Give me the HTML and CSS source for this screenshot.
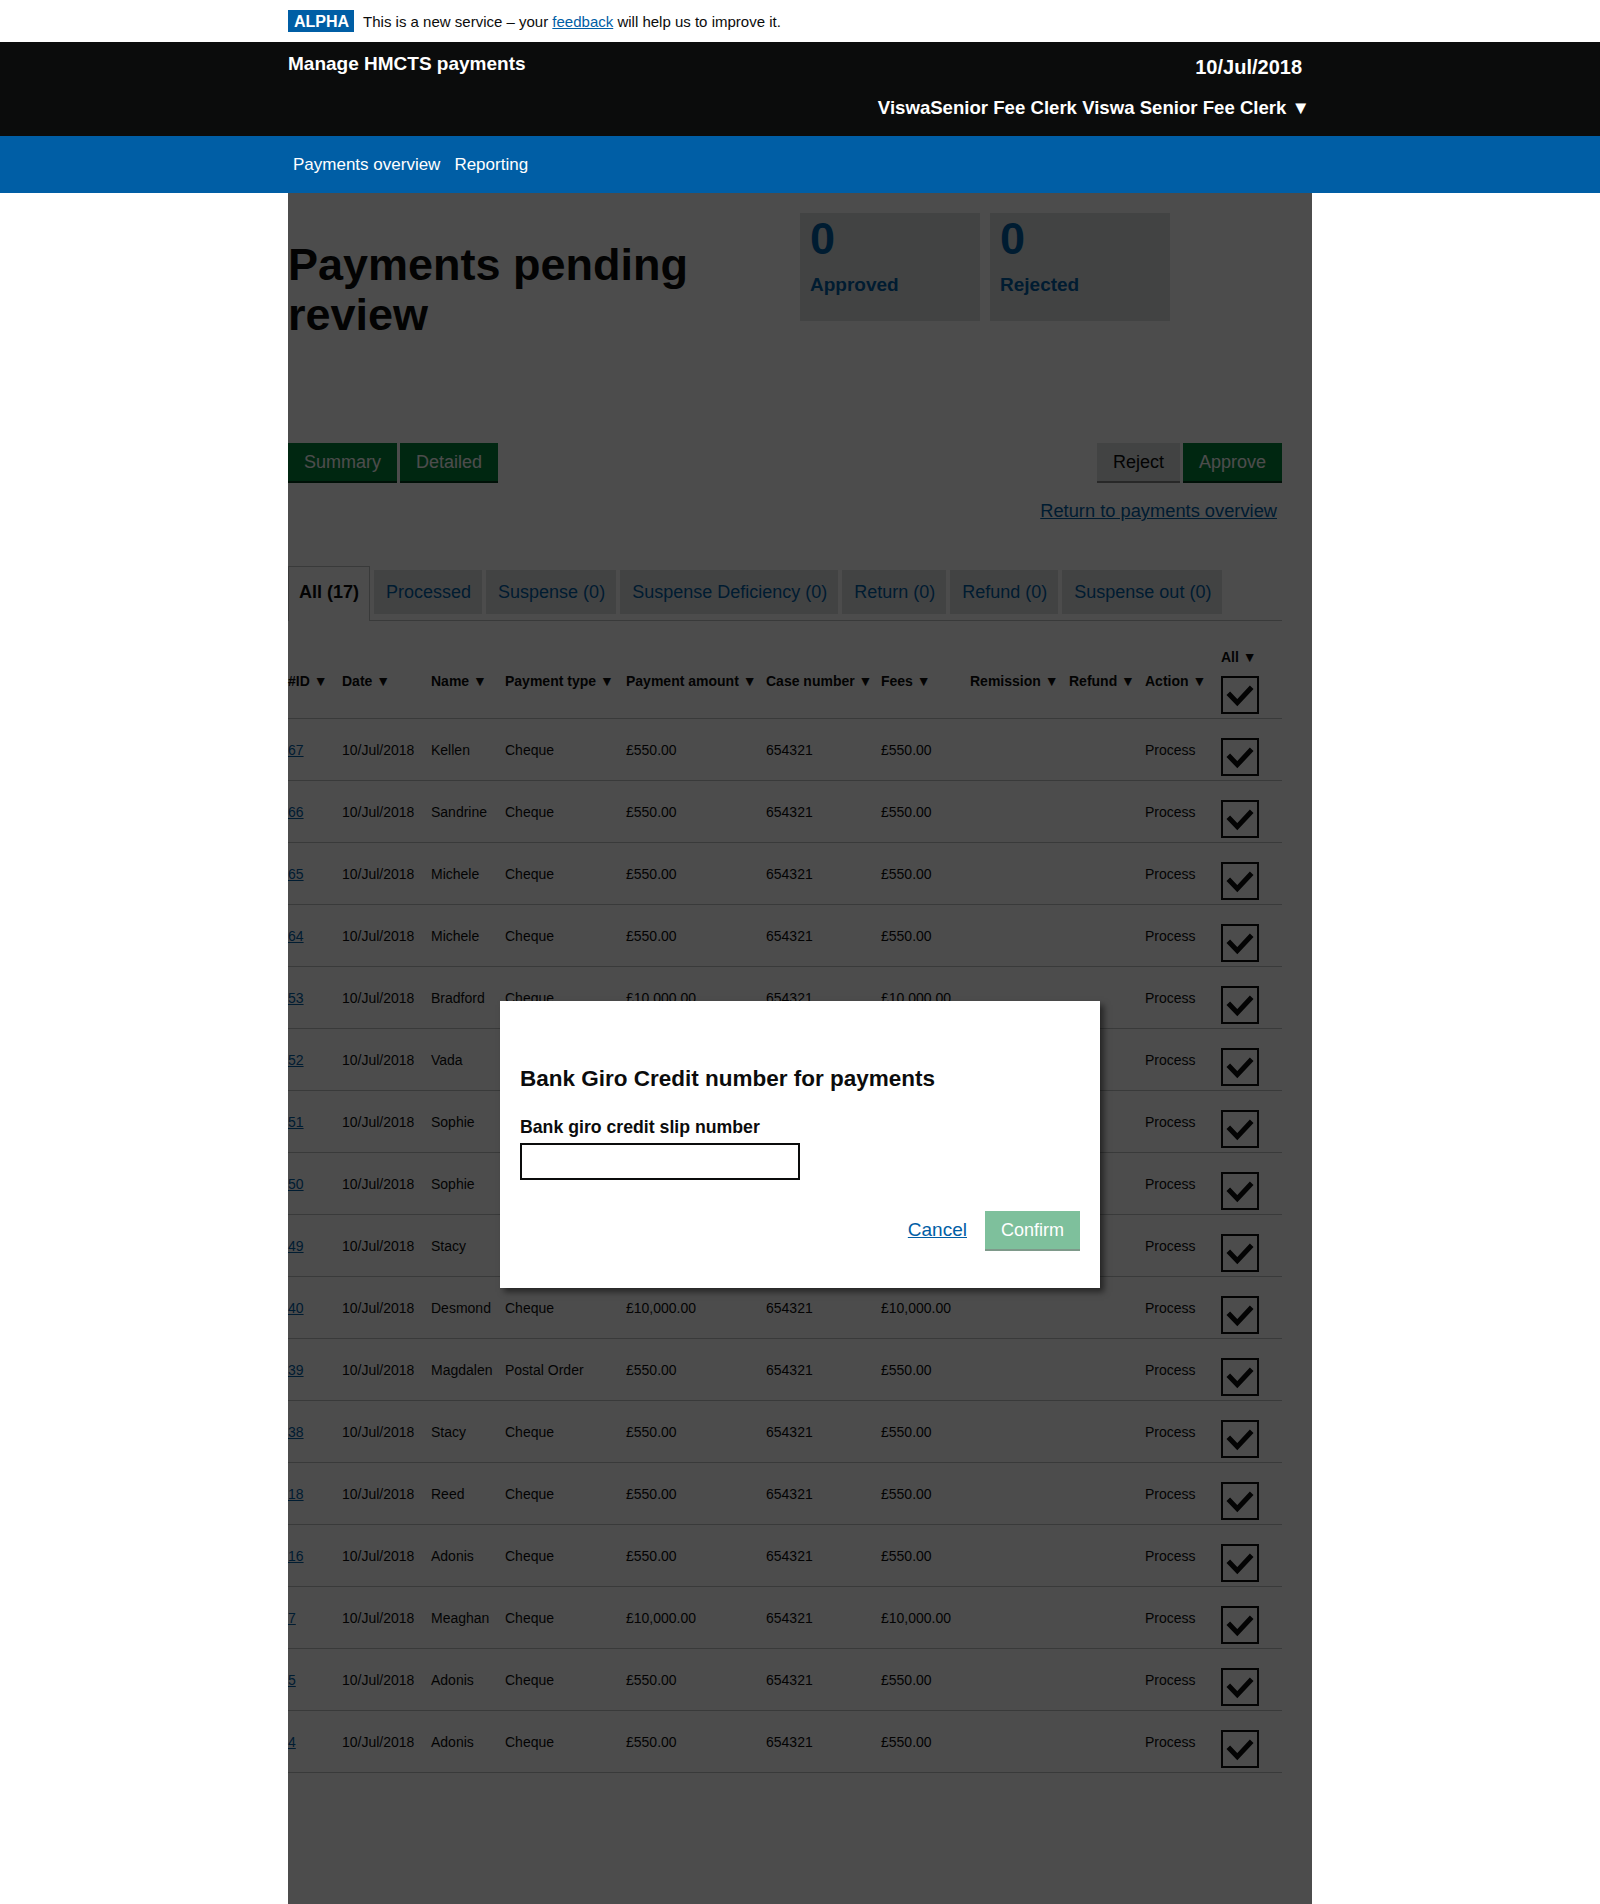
FILE: index.html
```html
<!DOCTYPE html>
<html lang="en">
<head>
<meta charset="utf-8">
<title>Payments pending review</title>
<link rel="stylesheet" href="styles.css">
</head>
<body>
<div class="phase">
  <div class="wrap phase-inner">
    <strong class="tag">ALPHA</strong>
    <span class="phase-text">This is a new service – your <a href="#">feedback</a> will help us to improve it.</span>
  </div>
</div>
<header class="header">
  <div class="wrap header-inner">
    <div class="service">Manage HMCTS payments</div>
    <div class="header-right">
      <div class="date">10/Jul/2018</div>
      <div class="user">ViswaSenior Fee Clerk Viswa Senior Fee Clerk ▼</div>
    </div>
  </div>
</header>
<nav class="nav">
  <div class="wrap nav-inner">
    <a href="#">Payments overview</a>
    <a href="#">Reporting</a>
  </div>
</nav>
<main class="wrap page">
  <div class="top">
    <h1>Payments pending review</h1>
    <div class="stats">
      <div class="stat"><div class="stat-num">0</div><div class="stat-label">Approved</div></div>
      <div class="stat"><div class="stat-num">0</div><div class="stat-label">Rejected</div></div>
    </div>
  </div>
  <div class="actions">
    <div class="btn-group">
      <button class="btn">Summary</button>
      <button class="btn">Detailed</button>
    </div>
    <div class="btn-group">
      <button class="btn btn-secondary">Reject</button>
      <button class="btn">Approve</button>
    </div>
  </div>
  <div class="return"><a href="#">Return to payments overview</a></div>
  <ul class="tabs">
    <li class="tab active">All (17)</li>
    <li class="tab">Processed</li>
    <li class="tab">Suspense (0)</li>
    <li class="tab">Suspense Deficiency (0)</li>
    <li class="tab">Return (0)</li>
    <li class="tab">Refund (0)</li>
    <li class="tab">Suspense out (0)</li>
  </ul>
  <table class="table">
    <colgroup>
      <col class="c-id"><col class="c-date"><col class="c-name"><col class="c-type"><col class="c-amount"><col class="c-case"><col class="c-fees"><col class="c-rem"><col class="c-ref"><col class="c-act"><col class="c-chk">
    </colgroup>
    <thead>
      <tr>
        <th>#ID ▼</th><th>Date ▼</th><th>Name ▼</th><th>Payment type ▼</th><th>Payment amount ▼</th><th>Case number ▼</th><th>Fees ▼</th><th>Remission ▼</th><th>Refund ▼</th><th>Action ▼</th>
        <th class="chk-cell"><div>All ▼</div><span class="check head-check"><svg viewBox="0 0 34 34" width="34" height="34"><polyline points="5.3,15.3 14.3,24.7 28.7,9.3" /></svg></span></th>
      </tr>
    </thead>
    <tbody>
      <tr><td><a href="#">67</a></td><td>10/Jul/2018</td><td>Kellen</td><td>Cheque</td><td>£550.00</td><td>654321</td><td>£550.00</td><td></td><td></td><td class="act">Process</td><td class="chk-cell"><span class="check"><svg viewBox="0 0 34 34" width="34" height="34"><polyline points="5.3,15.3 14.3,24.7 28.7,9.3" /></svg></span></td></tr>
      <tr><td><a href="#">66</a></td><td>10/Jul/2018</td><td>Sandrine</td><td>Cheque</td><td>£550.00</td><td>654321</td><td>£550.00</td><td></td><td></td><td class="act">Process</td><td class="chk-cell"><span class="check"><svg viewBox="0 0 34 34" width="34" height="34"><polyline points="5.3,15.3 14.3,24.7 28.7,9.3" /></svg></span></td></tr>
      <tr><td><a href="#">65</a></td><td>10/Jul/2018</td><td>Michele</td><td>Cheque</td><td>£550.00</td><td>654321</td><td>£550.00</td><td></td><td></td><td class="act">Process</td><td class="chk-cell"><span class="check"><svg viewBox="0 0 34 34" width="34" height="34"><polyline points="5.3,15.3 14.3,24.7 28.7,9.3" /></svg></span></td></tr>
      <tr><td><a href="#">64</a></td><td>10/Jul/2018</td><td>Michele</td><td>Cheque</td><td>£550.00</td><td>654321</td><td>£550.00</td><td></td><td></td><td class="act">Process</td><td class="chk-cell"><span class="check"><svg viewBox="0 0 34 34" width="34" height="34"><polyline points="5.3,15.3 14.3,24.7 28.7,9.3" /></svg></span></td></tr>
      <tr><td><a href="#">53</a></td><td>10/Jul/2018</td><td>Bradford</td><td>Cheque</td><td>£10,000.00</td><td>654321</td><td>£10,000.00</td><td></td><td></td><td class="act">Process</td><td class="chk-cell"><span class="check"><svg viewBox="0 0 34 34" width="34" height="34"><polyline points="5.3,15.3 14.3,24.7 28.7,9.3" /></svg></span></td></tr>
      <tr><td><a href="#">52</a></td><td>10/Jul/2018</td><td>Vada</td><td></td><td></td><td></td><td></td><td></td><td></td><td class="act">Process</td><td class="chk-cell"><span class="check"><svg viewBox="0 0 34 34" width="34" height="34"><polyline points="5.3,15.3 14.3,24.7 28.7,9.3" /></svg></span></td></tr>
      <tr><td><a href="#">51</a></td><td>10/Jul/2018</td><td>Sophie</td><td></td><td></td><td></td><td></td><td></td><td></td><td class="act">Process</td><td class="chk-cell"><span class="check"><svg viewBox="0 0 34 34" width="34" height="34"><polyline points="5.3,15.3 14.3,24.7 28.7,9.3" /></svg></span></td></tr>
      <tr><td><a href="#">50</a></td><td>10/Jul/2018</td><td>Sophie</td><td></td><td></td><td></td><td></td><td></td><td></td><td class="act">Process</td><td class="chk-cell"><span class="check"><svg viewBox="0 0 34 34" width="34" height="34"><polyline points="5.3,15.3 14.3,24.7 28.7,9.3" /></svg></span></td></tr>
      <tr><td><a href="#">49</a></td><td>10/Jul/2018</td><td>Stacy</td><td></td><td></td><td></td><td></td><td></td><td></td><td class="act">Process</td><td class="chk-cell"><span class="check"><svg viewBox="0 0 34 34" width="34" height="34"><polyline points="5.3,15.3 14.3,24.7 28.7,9.3" /></svg></span></td></tr>
      <tr><td><a href="#">40</a></td><td>10/Jul/2018</td><td>Desmond</td><td>Cheque</td><td>£10,000.00</td><td>654321</td><td>£10,000.00</td><td></td><td></td><td class="act">Process</td><td class="chk-cell"><span class="check"><svg viewBox="0 0 34 34" width="34" height="34"><polyline points="5.3,15.3 14.3,24.7 28.7,9.3" /></svg></span></td></tr>
      <tr><td><a href="#">39</a></td><td>10/Jul/2018</td><td>Magdalen</td><td>Postal Order</td><td>£550.00</td><td>654321</td><td>£550.00</td><td></td><td></td><td class="act">Process</td><td class="chk-cell"><span class="check"><svg viewBox="0 0 34 34" width="34" height="34"><polyline points="5.3,15.3 14.3,24.7 28.7,9.3" /></svg></span></td></tr>
      <tr><td><a href="#">38</a></td><td>10/Jul/2018</td><td>Stacy</td><td>Cheque</td><td>£550.00</td><td>654321</td><td>£550.00</td><td></td><td></td><td class="act">Process</td><td class="chk-cell"><span class="check"><svg viewBox="0 0 34 34" width="34" height="34"><polyline points="5.3,15.3 14.3,24.7 28.7,9.3" /></svg></span></td></tr>
      <tr><td><a href="#">18</a></td><td>10/Jul/2018</td><td>Reed</td><td>Cheque</td><td>£550.00</td><td>654321</td><td>£550.00</td><td></td><td></td><td class="act">Process</td><td class="chk-cell"><span class="check"><svg viewBox="0 0 34 34" width="34" height="34"><polyline points="5.3,15.3 14.3,24.7 28.7,9.3" /></svg></span></td></tr>
      <tr><td><a href="#">16</a></td><td>10/Jul/2018</td><td>Adonis</td><td>Cheque</td><td>£550.00</td><td>654321</td><td>£550.00</td><td></td><td></td><td class="act">Process</td><td class="chk-cell"><span class="check"><svg viewBox="0 0 34 34" width="34" height="34"><polyline points="5.3,15.3 14.3,24.7 28.7,9.3" /></svg></span></td></tr>
      <tr><td><a href="#">7</a></td><td>10/Jul/2018</td><td>Meaghan</td><td>Cheque</td><td>£10,000.00</td><td>654321</td><td>£10,000.00</td><td></td><td></td><td class="act">Process</td><td class="chk-cell"><span class="check"><svg viewBox="0 0 34 34" width="34" height="34"><polyline points="5.3,15.3 14.3,24.7 28.7,9.3" /></svg></span></td></tr>
      <tr><td><a href="#">5</a></td><td>10/Jul/2018</td><td>Adonis</td><td>Cheque</td><td>£550.00</td><td>654321</td><td>£550.00</td><td></td><td></td><td class="act">Process</td><td class="chk-cell"><span class="check"><svg viewBox="0 0 34 34" width="34" height="34"><polyline points="5.3,15.3 14.3,24.7 28.7,9.3" /></svg></span></td></tr>
      <tr><td><a href="#">4</a></td><td>10/Jul/2018</td><td>Adonis</td><td>Cheque</td><td>£550.00</td><td>654321</td><td>£550.00</td><td></td><td></td><td class="act">Process</td><td class="chk-cell"><span class="check"><svg viewBox="0 0 34 34" width="34" height="34"><polyline points="5.3,15.3 14.3,24.7 28.7,9.3" /></svg></span></td></tr>
    </tbody>
  </table>
  <div class="backdrop"></div>
  <div class="modal" role="dialog">
    <h2>Bank Giro Credit number for payments</h2>
    <label for="bgc">Bank giro credit slip number</label>
    <input id="bgc" type="text">
    <div class="modal-actions">
      <a href="#" class="cancel">Cancel</a>
      <button class="btn btn-disabled">Confirm</button>
    </div>
  </div>
</main>
</body>
</html>
```
FILE: styles.css
```css
* { box-sizing: border-box; }
html, body { margin: 0; padding: 0; }
body {
  font-family: "Liberation Sans", Arial, sans-serif;
  color: #0b0c0c;
  background: #fff;
}
.wrap { width: 1024px; margin: 0 auto; }

/* phase banner */
.phase { height: 42px; }
.phase-inner { display: flex; align-items: center; height: 42px; }
.tag {
  background: #005ea5; color: #fff; font-weight: 700; font-size: 16px;
  letter-spacing: 0; height: 22px; line-height: 23px; padding: 0 5px 0 6px;
  margin-right: 9px;
}
.phase-text { font-size: 15px; }
.phase-text a { color: #005ea5; }

/* header */
.header { background: #0b0c0c; color: #fff; height: 94px; }
.header-inner { display: flex; justify-content: space-between; align-items: flex-start; padding: 10px 2px 0 0; }
.service { font-weight: 700; font-size: 19px; line-height: 24px; }
.header-right { text-align: right; font-weight: 700; padding-top: 3px; }
.date { font-size: 20px; line-height: 24px; padding-right: 8px; }
.user { font-size: 18.6px; line-height: 24px; margin-top: 17px; }

/* nav */
.nav { background: #005ea5; height: 57px; }
.nav-inner { display: flex; align-items: center; height: 57px; padding-left: 5px; gap: 14px; }
.nav-inner a { color: #fff; text-decoration: none; font-size: 17px; }

/* page */
.page { position: relative; padding: 20px 30px 140px 0; }
.top { display: grid; grid-template-columns: 512px 1fr; }
h1 { margin: 27px 0 0; font-size: 45px; line-height: 50px; font-weight: 700; }
.stats { display: flex; gap: 10px; }
.stat { width: 180px; height: 108px; background: #dee0e2; color: #005ea5; padding: 4px 10px; font-weight: 700; }
.stat-num { font-size: 45px; line-height: 44px; }
.stat-label { font-size: 19px; line-height: 24px; margin-top: 12px; }

.actions { display: flex; justify-content: space-between; margin-top: 103px; }
.btn-group { display: flex; gap: 3px; }
.btn {
  height: 38px; padding: 0 16px; font-size: 18px; line-height: 38px; border: 0;
  color: #fff; background: #00823b; box-shadow: 0 2px 0 #003618;
  font-family: inherit; border-radius: 0;
}
.btn-secondary { background: #dee0e2; color: #0b0c0c; box-shadow: 0 2px 0 #858688; }
.return { margin-top: 18px; text-align: right; padding-right: 5px; font-size: 18.3px; line-height: 24px; }
.return a { color: #005ea5; }

/* tabs */
.tabs {
  list-style: none; margin: 43px 0 0; padding: 0; display: flex; align-items: flex-end; gap: 4px;
  border-bottom: 1px solid #bfc1c3;
}
.tab {
  height: 44px; line-height: 44px; padding: 0 11px 0 12px; background: #dee0e2; color: #005ea5;
  font-size: 18px; margin-bottom: 6px; white-space: nowrap;
}
.tab.active {
  height: 55px; background: #fff; color: #0b0c0c; font-weight: 700;
  border: 1px solid #bfc1c3; border-bottom: 0; margin-bottom: -1px;
  line-height: 24px; padding: 13px 10px 17px;
}

/* table */
.table { width: 994px; border-collapse: collapse; table-layout: fixed; font-size: 14px; margin-top: 18px; }
.c-id { width: 54px; } .c-date { width: 89px; } .c-name { width: 74px; } .c-type { width: 121px; }
.c-amount { width: 140px; } .c-case { width: 115px; } .c-fees { width: 89px; } .c-rem { width: 99px; }
.c-ref { width: 76px; } .c-act { width: 76px; } .c-chk { width: 61px; }
.table th {
  font-weight: 700; text-align: left; vertical-align: middle; padding: 8px 10px 4px 0;
  line-height: 20px; border-bottom: 1px solid #bfc1c3; white-space: nowrap;
}
.table td {
  vertical-align: top; padding: 19px 10px 4px 0; line-height: 24px;
  border-bottom: 1px solid #bfc1c3; white-space: nowrap;
}
.table td a { color: #005ea5; }
.table .chk-cell { padding-right: 0; }
.check {
  display: block; width: 38px; height: 38px; border: 2px solid #0b0c0c; background: #fff;
}
.check svg { display: block; }
.check polyline { fill: none; stroke: #0b0c0c; stroke-width: 5; stroke-linejoin: miter; stroke-linecap: butt; }
.head-check { margin-top: 9px; }

/* modal */
.backdrop { position: absolute; inset: 0; background: rgba(0, 0, 0, 0.7); }
.modal {
  position: absolute; left: 212px; top: 808px; width: 600px; height: 287px;
  background: #fff; padding: 0 20px; box-shadow: 4px 4px 6px rgba(0, 0, 0, 0.5);
}
.modal h2 { margin: 64px 0 0; font-size: 22.5px; line-height: 28px; font-weight: 700; }
.modal label { display: block; margin-top: 22px; font-size: 17.7px; font-weight: 700; line-height: 24px; }
.modal input {
  display: block; margin-top: 4px; width: 280px; height: 37px; border: 2px solid #0b0c0c;
  font-family: inherit; font-size: 18px; padding: 0 6px; border-radius: 0;
}
.modal-actions { display: flex; justify-content: flex-end; align-items: center; gap: 18px; margin-top: 31px; }
.cancel { color: #005ea5; font-size: 19px; }
.btn-disabled { opacity: 0.5; }
```
